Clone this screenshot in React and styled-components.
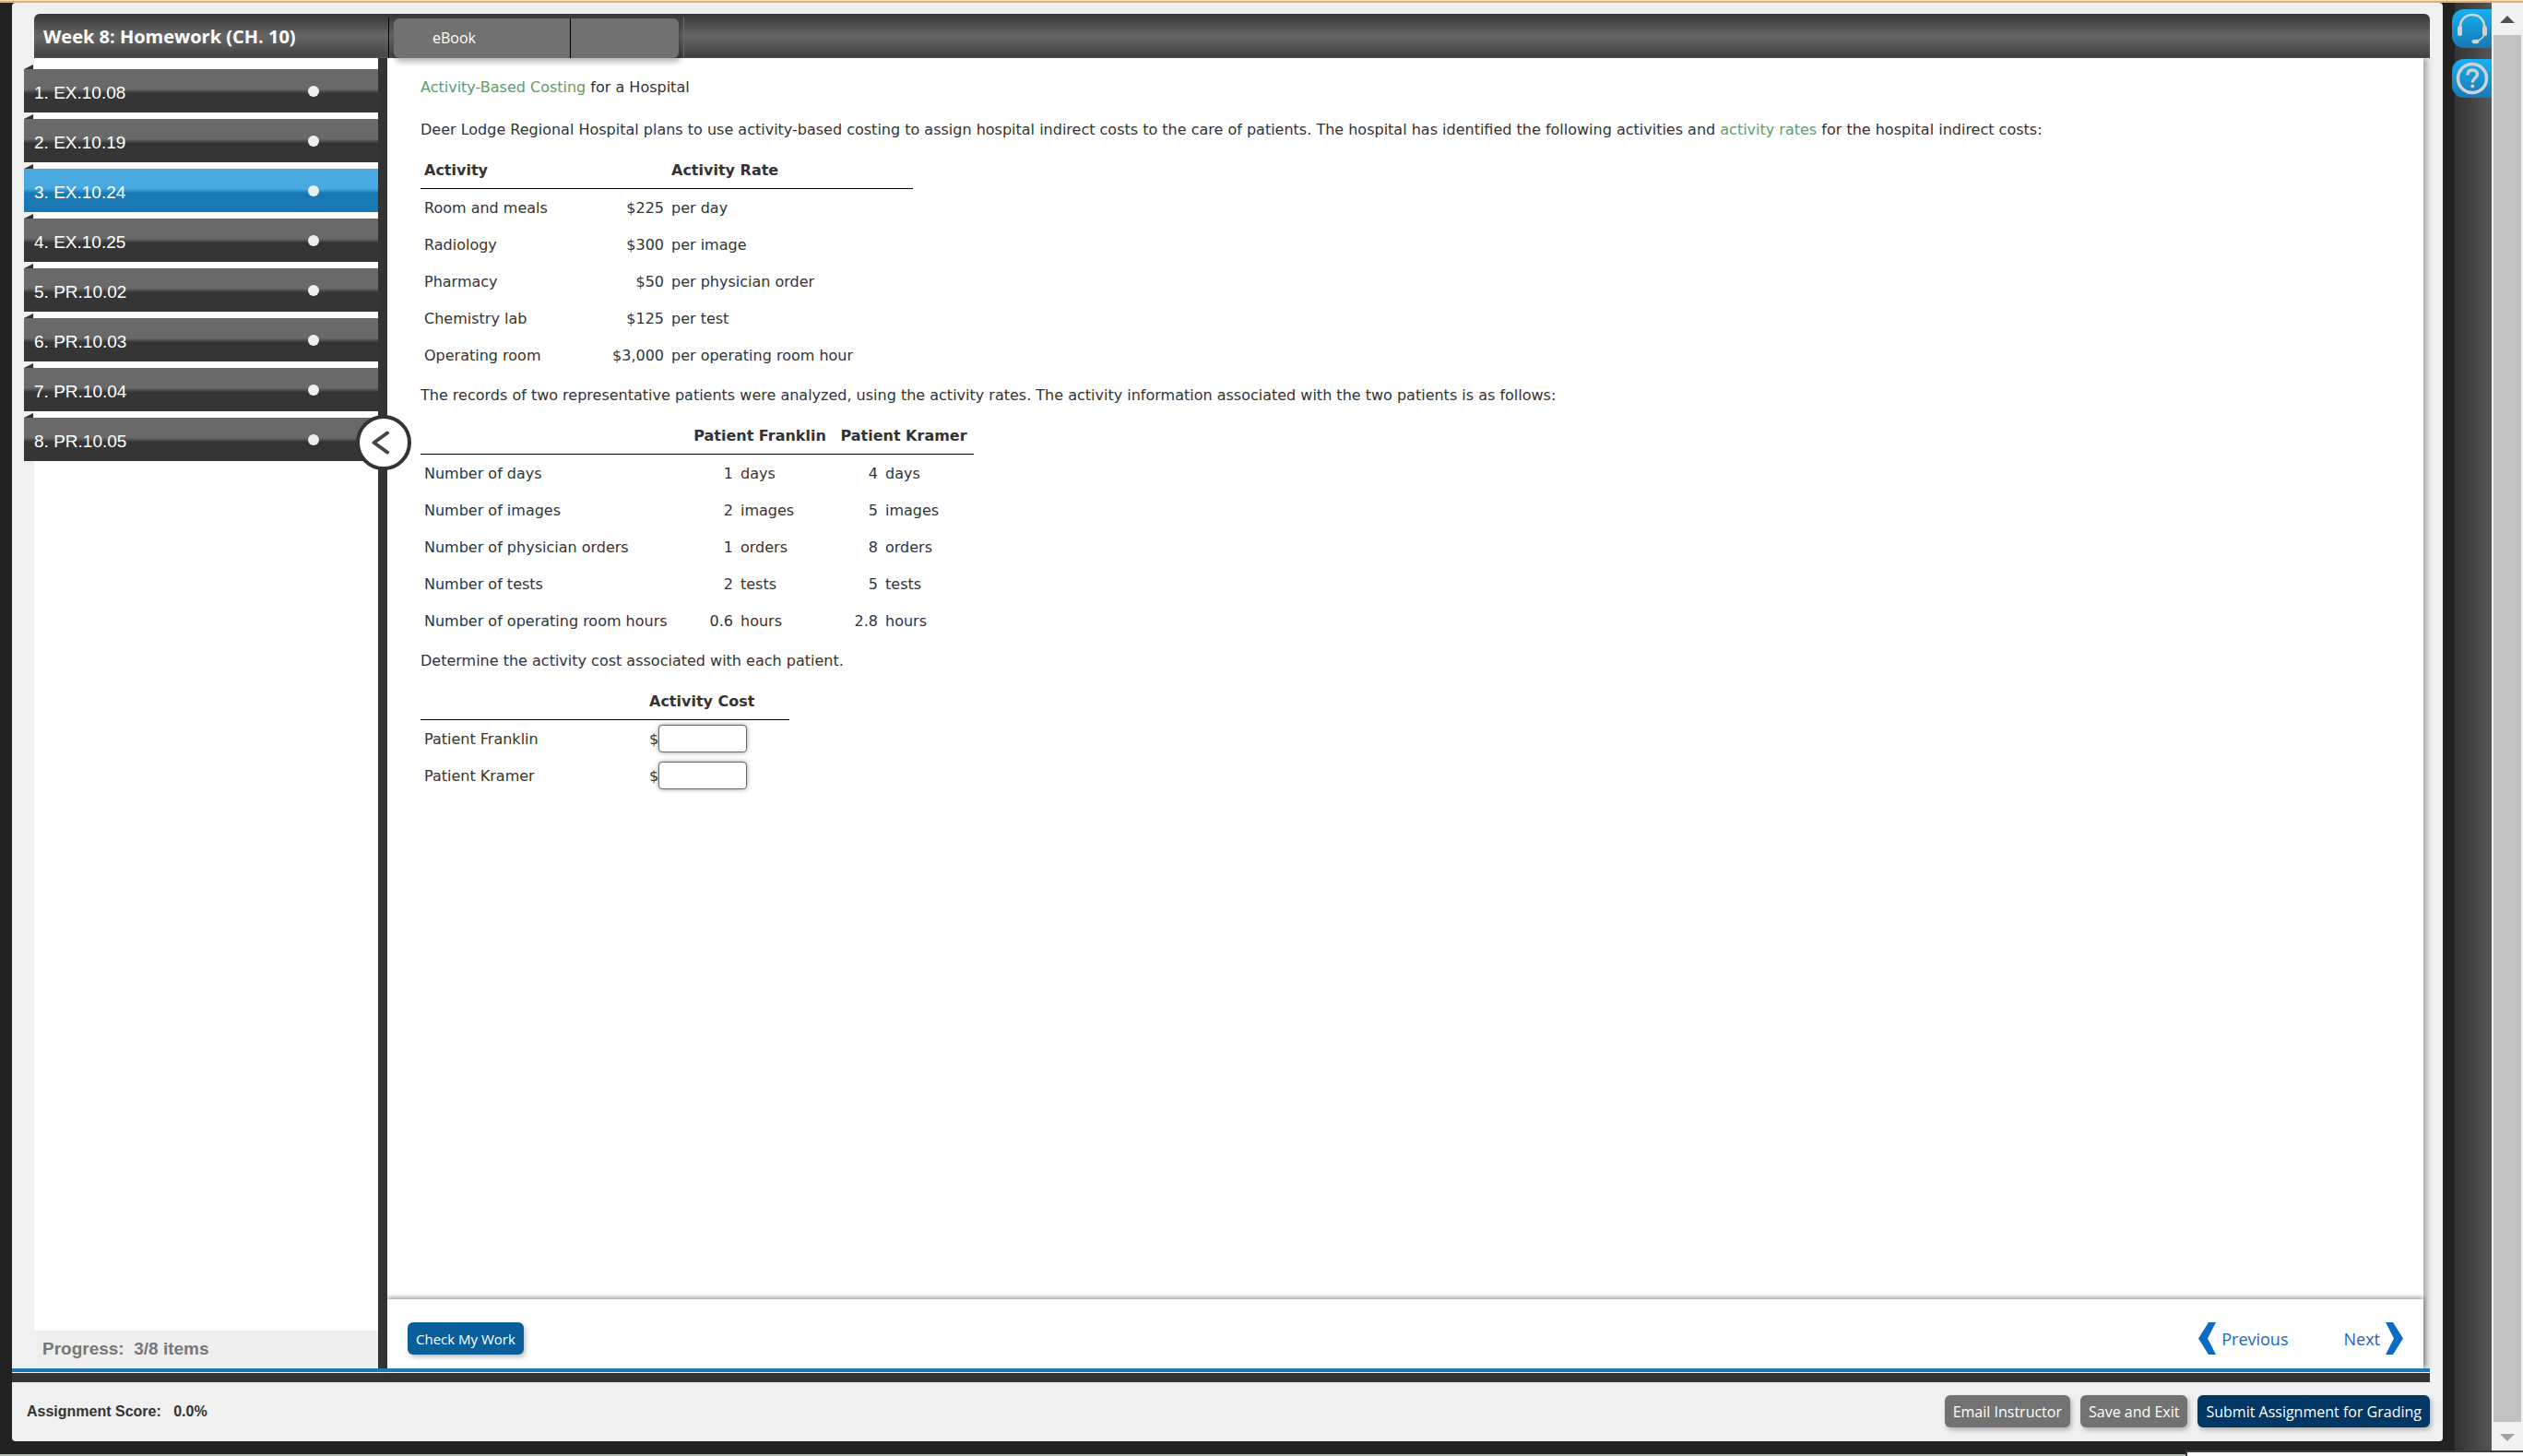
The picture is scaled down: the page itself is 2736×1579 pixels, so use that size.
import React from 'react';
import styled, { createGlobalStyle } from 'styled-components';

const assignments = [
  'EX.10.08',
  'EX.10.19',
  'EX.10.24',
  'EX.10.25',
  'PR.10.02',
  'PR.10.03',
  'PR.10.04',
  'PR.10.05',
];

const rates = [
  ['Room and meals', '$225', 'per day'],
  ['Radiology', '$300', 'per image'],
  ['Pharmacy', '$50', 'per physician order'],
  ['Chemistry lab', '$125', 'per test'],
  ['Operating room', '$3,000', 'per operating room hour'],
];

const usage = [
  ['Number of days', '1', '4', 'days'],
  ['Number of images', '2', '5', 'images'],
  ['Number of physician orders', '1', '8', 'orders'],
  ['Number of tests', '2', '5', 'tests'],
  ['Number of operating room hours', '0.6', '2.8', 'hours'],
];

const patients = [
  { id: 'franklin', name: 'Patient Franklin' },
  { id: 'kramer', name: 'Patient Kramer' },
];

const App = () => {
  return (
    <>
      <GlobalStyle />
      <Page>
        <TopStrip />
        <Shell>
          <Frame>
            <Header>
              <Title>Week 8: Homework (CH. 10)</Title>
              <Tabs>
                <TabGroup>
                  <Tab type="button">eBook</Tab>
                  <EmptyTab />
                </TabGroup>
              </Tabs>
            </Header>
            <Main>
              <Sidebar>
                <List>
                  {assignments.map((name, i) => (
                    <Item key={name}>
                      <ItemLink href={`#${name}`} $active={i === 2}>
                        <span>
                          {i + 1}.&nbsp;{name}
                        </span>
                        <Dot />
                      </ItemLink>
                    </Item>
                  ))}
                </List>
                <Progress>Progress:&nbsp; 3/8 items</Progress>
              </Sidebar>
              <Divider>
                <Collapse type="button" aria-label="Collapse">
                  <svg width="20" height="26" viewBox="0 0 20 26">
                    <path
                      d="M17 2.5 2.5 13 17 23.5"
                      fill="none"
                      stroke="#444"
                      strokeWidth="4"
                      strokeLinecap="round"
                      strokeLinejoin="round"
                    />
                  </svg>
                </Collapse>
              </Divider>
              <Content>
                <Question />
                <Actions>
                  <CheckButton type="button" $color="#0a5e9a">
                    Check My Work
                  </CheckButton>
                  <Pager>
                    <PagerLink href="#previous">
                      <Chevron />
                      Previous
                    </PagerLink>
                    <PagerLink href="#next">
                      Next
                      <Chevron right />
                    </PagerLink>
                  </Pager>
                </Actions>
              </Content>
            </Main>
            <BlueLine />
            <DarkLine />
            <Footer>
              <Score>Assignment Score:&nbsp;&nbsp; 0.0%</Score>
              <FooterButtons>
                <Button type="button" $color="#727272">
                  Email Instructor
                </Button>
                <Button type="button" $color="#727272">
                  Save and Exit
                </Button>
                <Button type="button" $color="#003764">
                  Submit Assignment for Grading
                </Button>
              </FooterButtons>
            </Footer>
          </Frame>
          <Rail>
            <RailButton type="button" aria-label="Support">
              <Headset />
            </RailButton>
            <RailButton type="button" aria-label="Help">
              <Help />
            </RailButton>
          </Rail>
          <ScrollTrack>
            <Arrow $color="#505050" />
            <Thumb />
            <Arrow $down $color="#a3a3a3" />
          </ScrollTrack>
        </Shell>
        <BottomStrip />
        <Popup />
      </Page>
    </>
  );
};

export default App;

const Question = () => {
  return (
    <QuestionWrapper>
      <Heading>
        <Term>Activity-Based Costing</Term> for a Hospital
      </Heading>
      <Text>
        Deer Lodge Regional Hospital plans to use activity-based costing to
        assign hospital indirect costs to the care of patients. The hospital has
        identified the following activities and <Term>activity rates</Term> for
        the hospital indirect costs:
      </Text>
      <Table $width="534px">
        <colgroup>
          <Col $width="188px" />
          <Col $width="80px" />
          <Col $width="266px" />
        </colgroup>
        <thead>
          <tr>
            <Th>Activity</Th>
            <Th />
            <Th>Activity Rate</Th>
          </tr>
        </thead>
        <tbody>
          {rates.map(([name, amount, unit]) => (
            <tr key={name}>
              <Td>{name}</Td>
              <Td $align="right">{amount}</Td>
              <Td>{unit}</Td>
            </tr>
          ))}
        </tbody>
      </Table>
      <Text>
        The records of two representative patients were analyzed, using the
        activity rates. The activity information associated with the two
        patients is as follows:
      </Text>
      <Table $width="600px">
        <colgroup>
          <Col $width="288px" />
          <Col $width="55px" />
          <Col $width="105px" />
          <Col $width="52px" />
          <Col $width="100px" />
        </colgroup>
        <thead>
          <tr>
            <Th />
            <Th colSpan={2} $align="center">
              Patient Franklin
            </Th>
            <Th colSpan={2} $align="center">
              Patient Kramer
            </Th>
          </tr>
        </thead>
        <tbody>
          {usage.map(([name, franklin, kramer, unit]) => (
            <tr key={name}>
              <Td>{name}</Td>
              <Td $align="right">{franklin}</Td>
              <Td>{unit}</Td>
              <Td $align="right">{kramer}</Td>
              <Td>{unit}</Td>
            </tr>
          ))}
        </tbody>
      </Table>
      <Text>Determine the activity cost associated with each patient.</Text>
      <Table $width="400px">
        <colgroup>
          <Col $width="244px" />
          <Col $width="156px" />
        </colgroup>
        <thead>
          <tr>
            <Th />
            <Th>Activity Cost</Th>
          </tr>
        </thead>
        <tbody>
          {patients.map(({ id, name }) => (
            <tr key={id}>
              <Td>
                <label htmlFor={id}>{name}</label>
              </Td>
              <Td>
                <Money>
                  $<MoneyInput id={id} type="text" />
                </Money>
              </Td>
            </tr>
          ))}
        </tbody>
      </Table>
    </QuestionWrapper>
  );
};

const Chevron = ({ right }) => (
  <svg width="19" height="35" viewBox="0 0 19 35">
    <path
      d={right ? 'M0 0h8l11 17.500-11 17.500H0l9-17.500z' : 'M19 0h-8L0 17.500 11 35h8l-9-17.500z'}
      fill="#0a6cc4"
    />
  </svg>
);

const Headset = () => (
  <svg width="34" height="34" viewBox="0 0 34 34" fill="none">
    <path d="M4 17v-2.500a13 12.500 0 0 1 26 0V17" stroke="#d0d2d4" strokeWidth="2.500" />
    <path d="M30 23c-1 4-4 6.500-9 7.500" stroke="#d0d2d4" strokeWidth="1.500" />
    <rect x="1" y="14" width="5" height="11" rx="2.500" fill="#d0d2d4" />
    <rect x="28" y="14" width="5" height="11" rx="2.500" fill="#d0d2d4" />
    <ellipse cx="20.500" cy="31" rx="4" ry="2.300" fill="#d0d2d4" />
  </svg>
);

const Help = () => (
  <svg width="36" height="36" viewBox="0 0 36 36" fill="none">
    <circle cx="18" cy="18" r="15.500" stroke="#d0d2d4" strokeWidth="3.500" />
    <path
      d="M13 14.500c0-3.500 2-5.500 5.200-5.500 3 0 5.300 1.800 5.300 4.600 0 4.200-5.300 4.200-5.300 8.900"
      stroke="#d0d2d4"
      strokeWidth="3.500"
    />
    <circle cx="18.200" cy="26.500" r="2" fill="#d0d2d4" />
  </svg>
);

const GlobalStyle = createGlobalStyle`
  * {
    box-sizing: border-box;
  }

  body {
    margin: 0;
    color: #333;
    font-family: 'DejaVu Sans', Verdana, sans-serif;
    font-size: 16px;
  }
`;

const Page = styled.div`
  position: relative;
  display: flex;
  flex-direction: column;
  min-height: 100vh;
  background: #222;
`;

const TopStrip = styled.div`
  height: 3px;
  background: #d0b088;
  border-top: 1px solid #fddcae;
`;

const BottomStrip = styled.div`
  height: 2px;
  background: #b0bfb2;
`;

const Popup = styled.div`
  position: absolute;
  right: 0;
  bottom: 0;
  width: 366px;
  height: 6px;
  background: white;
  border-top: 2px solid #3c3c3c;
  border-left: 2px solid #3c3c3c;
`;

const Shell = styled.div`
  display: flex;
  flex: 1;
`;

const Frame = styled.div`
  display: flex;
  flex: 1;
  flex-direction: column;
  min-width: 0;
  margin: 0 0 14px 13px;
  padding-top: 12px;
  background: #f0f0f0;
  border-radius: 4px;
`;

const Header = styled.header`
  display: flex;
  height: 48px;
  margin: 0 14px 0 24px;
  background: linear-gradient(#363636, #666 50%, #444 95%, #5a5a5a);
  border-radius: 6px 6px 0 0;
`;

const Title = styled.h1`
  width: 384px;
  margin: 0;
  padding-left: 10px;
  color: white;
  font-family: 'Open Sans', sans-serif;
  font-size: 20px;
  font-weight: 700;
  line-height: 50px;
`;

const Tabs = styled.nav`
  display: flex;
  margin-top: 4px;
  padding: 1px 5px 0;
  border-left: 1px solid black;
  border-right: 1px solid #707070;
`;

const TabGroup = styled.div`
  z-index: 1;
  display: flex;
  width: 309px;
  background: #717171;
  border-radius: 6px;
  box-shadow: 2px 4px 6px rgba(0, 0, 0, 0.3);
`;

const Tab = styled.button`
  width: 192px;
  padding: 0 0 2px 42px;
  background: none;
  border: 0;
  border-right: 1px solid black;
  color: white;
  font-family: 'Open Sans', sans-serif;
  font-size: 16px;
  text-align: left;
`;

const EmptyTab = styled.div`
  flex: 1;
`;

const Main = styled.main`
  display: flex;
  flex: 1;
  margin: 0 21px 0 24px;
`;

const Sidebar = styled.aside`
  display: flex;
  flex-direction: column;
  width: 373px;
  background: white;
`;

const List = styled.ul`
  flex: 1;
  margin: 0 0 0 -11px;
  padding: 5px 0 0;
  list-style: none;
`;

/* the little folded corner sits above each row */
const Item = styled.li`
  padding-top: 2px;

  &::before {
    content: '';
    display: block;
    width: 10px;
    height: 5px;
    background: #333;
    clip-path: polygon(100% 0, 100% 100%, 0 100%);
  }
`;

const ItemLink = styled.a`
  display: flex;
  align-items: center;
  justify-content: space-between;
  height: 47px;
  padding: 4px 64px 0 11px;
  background: ${({ $active }) =>
    $active
      ? 'linear-gradient(#48a8e0 46%, #1879b4 56%)'
      : 'linear-gradient(#696969 46%, #353535 56%)'};
  color: white;
  font-family: 'Liberation Sans', Arial, sans-serif;
  font-size: 19px;
  text-decoration: none;
`;

const Dot = styled.span`
  width: 12px;
  height: 12px;
  margin-bottom: 4px;
  background: #eee;
  border-radius: 50%;
`;

const Progress = styled.div`
  height: 41px;
  padding-left: 9px;
  background: #efefef;
  color: #777;
  font-family: 'Liberation Sans', Arial, sans-serif;
  font-size: 19px;
  font-weight: 700;
  line-height: 40px;
`;

const Divider = styled.div`
  position: relative;
  width: 10px;
  background: #333;
`;

const Collapse = styled.button`
  position: absolute;
  top: 387px;
  left: -24px;
  z-index: 2;
  display: flex;
  align-items: center;
  justify-content: center;
  width: 60px;
  height: 60px;
  padding: 0 6px 0 0;
  background: white;
  border: 4px solid #333;
  border-radius: 50%;
`;

const Content = styled.section`
  display: flex;
  flex: 1;
  flex-direction: column;
  min-width: 0;
  background: white;
  box-shadow: 4px 0 6px rgba(0, 0, 0, 0.3);
`;

const QuestionWrapper = styled.article`
  flex: 1;
  padding: 8px 36px 0;
`;

const Text = styled.p`
  margin: 12px 0 11px;
  line-height: 24px;
`;

const Heading = styled(Text)`
  margin-bottom: 22px;
`;

const Term = styled.span`
  color: #5f9d66;
`;

const Table = styled.table`
  width: ${({ $width }) => $width};
  table-layout: fixed;
  border-collapse: separate;
  border-spacing: 0;
`;

const Col = styled.col`
  width: ${({ $width }) => $width};
`;

const Td = styled.td`
  height: 40px;
  padding: 0 4px;
  text-align: ${({ $align }) => $align || 'left'};
  white-space: nowrap;
`;

const Th = styled.th`
  height: 41px;
  padding: 0 4px;
  border-bottom: 1px solid black;
  text-align: ${({ $align }) => $align || 'left'};
  white-space: nowrap;
`;

const Money = styled.div`
  display: flex;
  align-items: center;
`;

const MoneyInput = styled.input`
  width: 96px;
  height: 30px;
  border: 1px solid #666;
  border-radius: 4px;
  box-shadow: 0 0 5px rgba(0, 0, 0, 0.4);
`;

const Actions = styled.div`
  display: flex;
  align-items: center;
  justify-content: space-between;
  height: 75px;
  padding: 10px 22px 0;
  box-shadow: 0 -2px 5px rgba(0, 0, 0, 0.4);
`;

const Button = styled.button`
  height: 35px;
  padding: 0 9px;
  background: ${({ $color }) => $color};
  border: 0;
  border-radius: 6px;
  box-shadow: 2px 3px 5px rgba(0, 0, 0, 0.25);
  color: white;
  font-family: 'Open Sans', sans-serif;
  font-size: 16px;
`;

const CheckButton = styled(Button)`
  font-size: 15px;
`;

const Pager = styled.nav`
  display: flex;
  gap: 60px;
`;

const PagerLink = styled.a`
  display: flex;
  align-items: center;
  gap: 6px;
  color: #1268c3;
  font-family: 'Open Sans', sans-serif;
  font-size: 18px;
  text-decoration: none;
`;

const BlueLine = styled.div`
  height: 4px;
  margin-right: 14px;
  background: #1b7ab3;
`;

const DarkLine = styled.div`
  height: 10px;
  margin: 1px 14px 0 0;
  background: #333;
`;

const Footer = styled.footer`
  display: flex;
  align-items: center;
  justify-content: space-between;
  height: 64px;
  padding: 0 14px 1px 16px;
`;

const Score = styled.div`
  font-family: 'Liberation Sans', Arial, sans-serif;
  font-size: 16px;
  font-weight: 700;
`;

const FooterButtons = styled.div`
  display: flex;
  gap: 11px;
`;

const Rail = styled.aside`
  display: flex;
  flex-direction: column;
  align-items: flex-end;
  gap: 12px;
  width: 53px;
  padding-top: 7px;
  background: linear-gradient(90deg, #222 13px, #333 13px, #555);
`;

const RailButton = styled.button`
  display: flex;
  align-items: center;
  justify-content: center;
  width: 43px;
  height: 42px;
  padding: 0;
  background: linear-gradient(#17b1f2, #1879b4);
  border: 0;
  border-radius: 13px 0 0 13px;
`;

const ScrollTrack = styled.div`
  display: flex;
  flex-direction: column;
  align-items: center;
  gap: 13px;
  width: 34px;
  padding: 14px 0;
  background: #f1f1f1;
`;

const Thumb = styled.div`
  flex: 1;
  width: 30px;
  background: #c1c1c1;
`;

const Arrow = styled.div`
  width: 16px;
  height: 8px;
  background: ${({ $color }) => $color};
  clip-path: ${({ $down }) =>
    $down ? 'polygon(0 0, 100% 0, 50% 100%)' : 'polygon(0 100%, 100% 100%, 50% 0)'};
`;
